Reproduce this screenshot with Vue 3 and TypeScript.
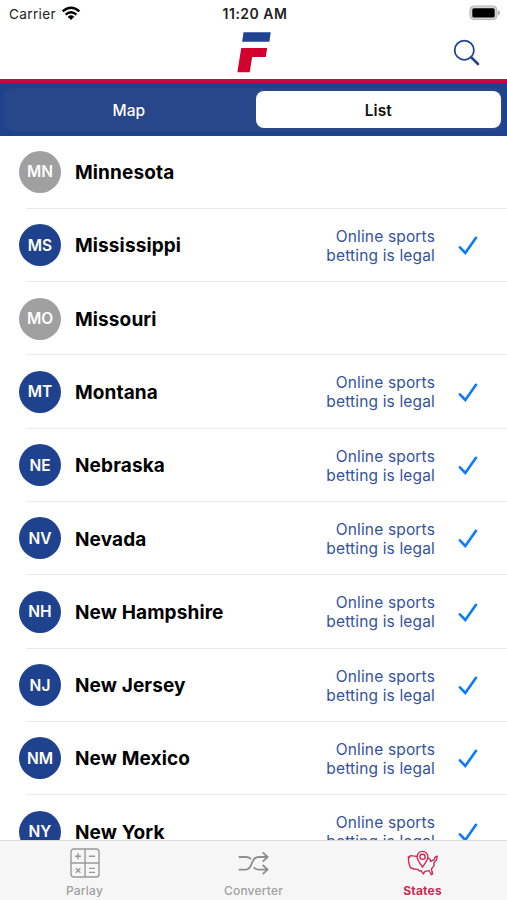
<script setup lang="ts">
interface StateRow {
  code: string
  name: string
  legal: boolean
}

const states: StateRow[] = [
  { code: 'MN', name: 'Minnesota', legal: false },
  { code: 'MS', name: 'Mississippi', legal: true },
  { code: 'MO', name: 'Missouri', legal: false },
  { code: 'MT', name: 'Montana', legal: true },
  { code: 'NE', name: 'Nebraska', legal: true },
  { code: 'NV', name: 'Nevada', legal: true },
  { code: 'NH', name: 'New Hampshire', legal: true },
  { code: 'NJ', name: 'New Jersey', legal: true },
  { code: 'NM', name: 'New Mexico', legal: true },
  { code: 'NY', name: 'New York', legal: true },
]
</script>

<template>
  <div class="screen">
    <header class="status">
      <div class="carrier">
        <span>Carrier</span>
        <svg class="wifi" width="20" height="15" viewBox="0 0 20 15">
          <g fill="none" stroke="#000" stroke-width="2.5">
            <path d="M1.6 5.4 Q10 -2 18.4 5.4" />
            <path d="M4.6 8.6 Q10 3.9 15.4 8.6" />
          </g>
          <path d="M6.7 10.7 Q10 8 13.3 10.7 L10 14.1 Z" fill="#000" />
        </svg>
      </div>
      <span class="clock">11:20 AM</span>
      <div class="battery-wrap">
        <svg width="32" height="16" viewBox="0 0 32 16">
          <rect x="1" y="1" width="27" height="13.6" rx="4" fill="#d6d6d6" stroke="#b4b4b4" />
          <rect x="3.3" y="3.2" width="22.4" height="9.4" rx="1.6" fill="#000" />
          <path d="M29 5.2 Q31.2 6 31.2 7.8 Q31.2 9.6 29 10.4 Z" fill="#b4b4b4" />
        </svg>
      </div>
    </header>

    <div class="navbar">
      <svg class="logo" width="34" height="42" viewBox="0 0 34 42">
        <path d="M6.5 1.2 H33.7 L32.4 10.7 H5.2 Z" fill="#1f438f" />
        <path d="M4.2 17.1 H30.1 L28.8 26 H15.1 L12.7 41.2 H0.4 Z" fill="#d1002f" />
      </svg>
      <svg class="search" width="28" height="28" viewBox="0 0 28 28" fill="none" stroke="#1f438f">
        <circle cx="11.3" cy="11.2" r="9.6" stroke-width="1.8" />
        <path d="M18.3 18.3 L25 25" stroke-width="2.6" stroke-linecap="round" />
      </svg>
    </div>

    <div class="segment-bar">
      <div class="segments">
        <div class="segment">Map</div>
        <div class="segment active">List</div>
      </div>
    </div>

    <main class="list">
      <div v-for="s in states" :key="s.code" class="row">
        <div class="badge" :class="{ off: !s.legal }">{{ s.code }}</div>
        <div class="name">{{ s.name }}</div>
        <template v-if="s.legal">
          <div class="note">Online sports<br />betting is legal</div>
          <svg class="check" width="20" height="20" viewBox="0 0 20 20">
            <path d="M1.9 11.3 L7.3 17 L18 1.8" fill="none" stroke="#087cfb" stroke-width="2.6" stroke-linecap="round" />
          </svg>
        </template>
      </div>
    </main>

    <nav class="tabs">
      <div class="tab">
        <svg width="32" height="32" viewBox="0 0 32 32" fill="none" stroke="#999" stroke-width="1.4">
          <rect x="2" y="2" width="28" height="28" rx="2.8" />
          <path d="M16 2 V30 M2 16 H30" />
          <path d="M6 9.3 H12 M9 6.3 V12.3 M20 9.3 H26 M6.8 21.2 L11.4 25.8 M11.4 21.2 L6.8 25.8 M20 21.4 H26 M20 25.4 H26" />
        </svg>
        <span>Parlay</span>
      </div>
      <div class="tab">
        <svg width="32" height="32" viewBox="0 0 32 32" fill="none" stroke="#8e8e8e" stroke-width="1.8" stroke-linecap="round" stroke-linejoin="round">
          <path d="M1.4 10 H8 Q10.6 10 12.4 11.7" />
          <path d="M1.4 22.6 H8 C15.2 22.6 12.2 10 20.6 10 H29.4" />
          <path d="M16.4 20.8 Q18 22.6 20.8 22.6 H29.4" />
          <path d="M25.2 5.9 L29.6 10 L25.2 14.1 M25.2 18.5 L29.6 22.6 L25.2 26.7" />
        </svg>
        <span>Converter</span>
      </div>
      <div class="tab current">
        <svg width="32" height="32" viewBox="0 0 32 32" fill="none" stroke="#cf284f" stroke-width="1.35" stroke-linejoin="round" stroke-linecap="round">
          <path d="M9.6 9.4 L3.2 8.6 L2.6 10.4 L1.4 9.8 L1.6 15 L3.3 20.6 L7 22 L10.6 22.3 L12.6 24 L14.2 23.6 L16.2 27 L18 24.4 L22.2 23.7 L24.4 27.8 L25.5 27 L24.5 21.8 L27.2 18.4 L27 15.7 L29.6 12.8 L30.2 9.2 L28.2 10 L27.2 12.6 L23.6 14.4 L23 12 L21 11" />
          <path d="M15.5 20.2 C13.8 17 10.1 13.6 10.1 9.8 C10.1 6.7 12.5 4.4 15.5 4.4 C18.5 4.4 20.9 6.7 20.9 9.8 C20.9 13.6 17.2 17 15.5 20.2 Z" />
          <circle cx="15.5" cy="9.8" r="2.6" />
        </svg>
        <span>States</span>
      </div>
    </nav>
  </div>
</template>

<style>
body {
  margin: 0;
  background: #fff;
}
</style>

<style scoped>
.screen {
  width: 507px;
  height: 900px;
  display: flex;
  flex-direction: column;
  overflow: hidden;
  background: #fff;
  color: #000;
  font-family: Inter, 'Liberation Sans', sans-serif;
}
.status {
  flex: none;
  height: 28px;
  box-sizing: border-box;
  padding: 0 6px 0 9px;
  display: grid;
  grid-template-columns: 1fr auto 1fr;
  align-items: center;
  font-size: 13.6px;
  color: #222;
}
.carrier {
  display: flex;
  align-items: center;
  gap: 5px;
  letter-spacing: 0.35px;
}
.wifi {
  margin-bottom: 2px;
}
.clock {
  padding-bottom: 1px;
  font-weight: 600;
  font-size: 14px;
  letter-spacing: 0.5px;
}
.battery-wrap {
  display: flex;
  justify-content: flex-end;
  padding-bottom: 2px;
}
.navbar {
  flex: none;
  height: 51px;
  display: grid;
  grid-template-columns: 1fr auto 1fr;
  align-items: start;
  border-bottom: 4px solid #c70a3c;
  box-sizing: content-box;
}
.logo {
  grid-column: 2;
  margin: 3px 0 0 0;
}
.search {
  justify-self: end;
  margin: 11px 26px 0 0;
}
.segment-bar {
  flex: none;
  height: 53px;
  box-sizing: border-box;
  padding: 5px 4px;
  background: #1f428c;
}
.segments {
  height: 43px;
  box-sizing: border-box;
  padding: 3px 2px;
  display: grid;
  grid-template-columns: 1fr 1fr;
  gap: 4px;
  border-radius: 9px;
  background: #28478b;
}
.segment {
  display: flex;
  align-items: center;
  justify-content: center;
  padding-top: 1px;
  border-radius: 8px;
  font-size: 15.5px;
  font-weight: 500;
  color: #fff;
}
.segment.active {
  background: #fff;
  color: #111;
  font-weight: 600;
}
.list {
  flex: 1;
  min-height: 0;
  overflow: hidden;
}
.row {
  height: 73.3px;
  box-sizing: border-box;
  padding: 0 29px 1.4px 19px;
  display: flex;
  align-items: center;
  background: linear-gradient(#e9e9ea, #e9e9ea) 26px calc(100% - 0.5px) / 100% 1px no-repeat;
}
.badge {
  flex: none;
  width: 42px;
  height: 42px;
  border-radius: 50%;
  display: flex;
  align-items: center;
  justify-content: center;
  background: #1f428f;
  color: #fff;
  font-size: 15.5px;
  font-weight: 600;
}
.badge.off {
  background: #a0a0a0;
}
.name {
  flex: 1;
  margin-left: 14px;
  padding-top: 1.2px;
  font-size: 19px;
  font-weight: 700;
  letter-spacing: 0.12px;
}
.note {
  padding-top: 1px;
  text-align: right;
  font-size: 15.5px;
  letter-spacing: 0.16px;
  line-height: 19px;
  color: #3452a0;
}
.check {
  margin: 2px 0 0 23px;
}
.tabs {
  flex: none;
  height: 60px;
  box-sizing: border-box;
  display: grid;
  grid-template-columns: repeat(3, 1fr);
  border-top: 1px solid #dcdcdc;
  background: #f6f6f6;
}
.tab {
  display: flex;
  flex-direction: column;
  align-items: center;
  padding-top: 6px;
  font-size: 12px;
  font-weight: 500;
  letter-spacing: 0.2px;
  color: #a0a0a0;
}
.tab span {
  margin-top: 4px;
}
.tab.current {
  color: #cf284f;
  font-weight: 700;
}
</style>
